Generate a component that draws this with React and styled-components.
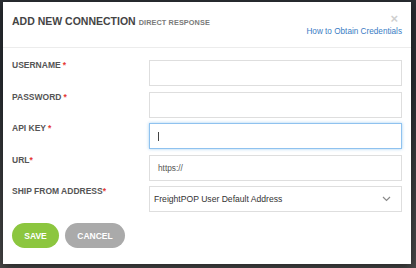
import React from 'react';
import styled, { createGlobalStyle } from 'styled-components';

const GlobalStyle = createGlobalStyle`
  html, body {
    margin: 0;
    padding: 0;
    background: #3b3e42;
    font-family: "Liberation Sans", Arial, sans-serif;
  }
  * { box-sizing: border-box; }
`;

const Backdrop = styled.div`
  width: 416px;
  height: 268px;
  padding: 2px 5px 4px 3px;
  background: linear-gradient(#2a2e33 0, #2a2e33 30%, #4a4a4a 100%);
`;

const Modal = styled.div`
  width: 408px;
  height: 262px;
  background: #ffffff;
  box-shadow: 0 3px 9px rgba(0, 0, 0, 0.5);
  display: flex;
  flex-direction: column;
`;

const Header = styled.div`
  display: flex;
  justify-content: space-between;
  align-items: flex-start;
  height: 46px;
  padding: 12px 9px 0 9px;
  border-bottom: 1px solid #ececec;
`;

const Title = styled.h4`
  margin: 0;
  font-size: 10.5px;
  font-weight: bold;
  color: #444;
  line-height: 14px;
  span {
    font-size: 7.3px;
    color: #7a7a7a;
    margin-left: 3px;
    letter-spacing: 0.1px;
  }
`;

const HeaderSide = styled.div`
  display: flex;
  flex-direction: column;
  align-items: flex-end;
`;

const Close = styled.button`
  border: none;
  background: none;
  padding: 0;
  margin: -2px 4px 0 0;
  font-size: 13px;
  line-height: 13px;
  font-weight: bold;
  color: #cfcfcf;
  font-family: "Liberation Sans", Arial, sans-serif;
`;

const HelpLink = styled.a`
  margin-top: 2px;
  font-size: 8.2px;
  color: #3a7cc4;
  text-decoration: none;
`;

const Body = styled.form`
  padding: 12px 9px 0 9px;
  display: flex;
  flex-direction: column;
  gap: 5.5px;
`;

const Row = styled.div`
  display: grid;
  grid-template-columns: 137px 253px;
  align-items: start;
`;

const Label = styled.label`
  padding-top: 0;
  font-size: 8.5px;
  font-weight: bold;
  color: #555;
  line-height: 10px;
  b {
    color: #e53935;
    margin-left: ${(p) => (p.$tight ? '0' : '2px')};
  }
`;

const Field = styled.div`
  position: relative;
  height: 26px;
  border: 1px solid ${(p) => (p.$focused ? '#8fc2ef' : '#dedede')};
  box-shadow: ${(p) => (p.$focused ? '0 0 3px rgba(102, 175, 233, 0.6)' : 'none')};
  background: #fff;
  display: flex;
  align-items: center;
  padding: 0 8px;
  font-size: 8.3px;
  color: #555;
`;

const Caret = styled.span`
  display: block;
  width: 1px;
  height: 9px;
  background: #444;
`;

const SelectBox = styled(Field)`
  justify-content: space-between;
  padding: 0 10px 0 4px;
  font-size: 8.6px;
  color: #333;
`;

const Actions = styled.div`
  display: flex;
  gap: 6px;
  padding: 11px 9px 0 9px;
`;

const Pill = styled.button`
  height: 25px;
  width: ${(p) => p.$w}px;
  border: none;
  border-radius: 13px;
  background: ${(p) => p.$bg};
  color: #fff;
  font-family: "Liberation Sans", Arial, sans-serif;
  font-size: 8.5px;
  font-weight: 600;
  padding: 0;
`;

const Chevron = () => (
  <svg width="9" height="6" viewBox="0 0 9 6">
    <path d="M1 1 L4.5 4.5 L8 1" fill="none" stroke="#8a8a8a" strokeWidth="1.2" />
  </svg>
);

export default function App() {
  return (
    <>
      <GlobalStyle />
      <Backdrop>
        <Modal>
          <Header>
            <Title>
              ADD NEW CONNECTION<span>DIRECT RESPONSE</span>
            </Title>
            <HeaderSide>
              <Close type="button">×</Close>
              <HelpLink href="#">How to Obtain Credentials</HelpLink>
            </HeaderSide>
          </Header>
          <Body>
            <Row>
              <Label>USERNAME<b>*</b></Label>
              <Field />
            </Row>
            <Row>
              <Label>PASSWORD<b>*</b></Label>
              <Field />
            </Row>
            <Row>
              <Label>API KEY<b>*</b></Label>
              <Field $focused><Caret /></Field>
            </Row>
            <Row>
              <Label $tight>URL<b>*</b></Label>
              <Field>https://</Field>
            </Row>
            <Row>
              <Label $tight>SHIP FROM ADDRESS<b>*</b></Label>
              <SelectBox>
                FreightPOP User Default Address
                <Chevron />
              </SelectBox>
            </Row>
          </Body>
          <Actions>
            <Pill type="button" $w={47} $bg="#8cc63f">SAVE</Pill>
            <Pill type="button" $w={60} $bg="#aaaaaa">CANCEL</Pill>
          </Actions>
        </Modal>
      </Backdrop>
    </>
  );
}
